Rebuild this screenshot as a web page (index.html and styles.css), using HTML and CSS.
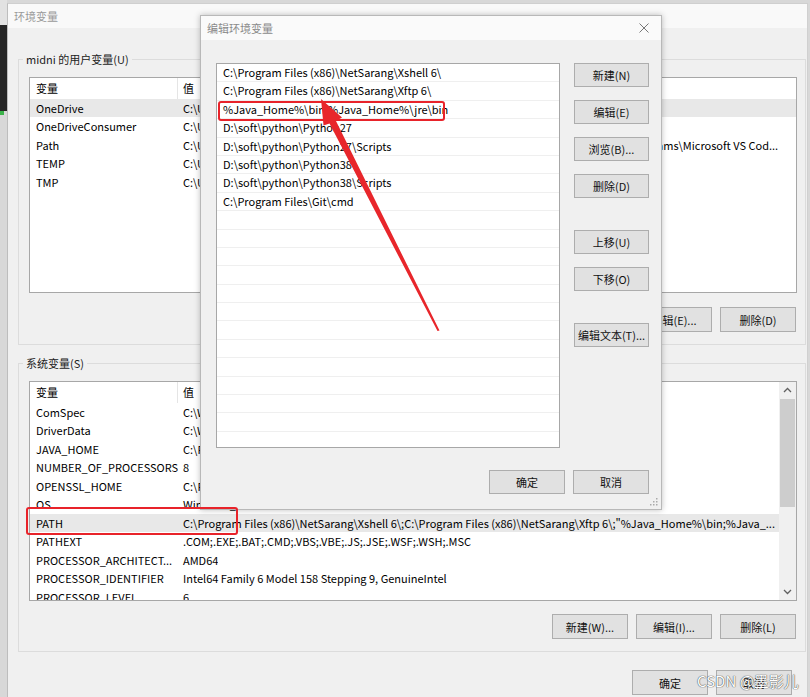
FILE: index.html
```html
<!DOCTYPE html>
<html lang="zh-CN">
<head>
	<meta charset="UTF-8">
	<title>环境变量</title>
	<link rel="stylesheet" href="styles.css">
</head>
<body>
	<div class="screen">
		<div class="side">
			<div class="side-top"></div>
			<div class="side-dark"></div>
			<div class="side-green"></div>
		</div>
		<div class="win">
			<div class="win-title">环境变量</div>
			<div class="win-body">
				<div class="group group-user">
					<div class="group-title">midni 的用户变量(U)</div>
					<div class="list list-user">
						<div class="list-body">
							<div class="row head"><span class="name">变量</span><span class="val">值</span></div>
							<div class="row sel"><span class="name">OneDrive</span><span class="val">C:\Users\midni\OneDrive</span></div>
							<div class="row"><span class="name">OneDriveConsumer</span><span class="val">C:\Users\midni\OneDrive</span></div>
							<div class="row"><span class="name">Path</span><span class="val"><span class="val-hid">C:\Users\midni\AppData\Local\Microsoft\WindowsApps;C:\Users\midni\AppData\Local\Progr</span>ams\Microsoft VS Cod...</span></div>
							<div class="row"><span class="name">TEMP</span><span class="val">C:\Users\midni\AppData\Local\Temp</span></div>
							<div class="row"><span class="name">TMP</span><span class="val">C:\Users\midni\AppData\Local\Temp</span></div>
						</div>
					</div>
					<div class="btn-row">
						<button class="btn">新建(N)...</button>
						<button class="btn">编辑(E)...</button>
						<button class="btn">删除(D)</button>
					</div>
				</div>

				<div class="group group-sys">
					<div class="group-title">系统变量(S)</div>
					<div class="list list-sys">
						<div class="list-body">
							<div class="row head"><span class="name">变量</span><span class="val">值</span></div>
							<div class="row"><span class="name">ComSpec</span><span class="val">C:\WINDOWS\system32\cmd.exe</span></div>
							<div class="row"><span class="name">DriverData</span><span class="val">C:\Windows\System32\Drivers\DriverData</span></div>
							<div class="row"><span class="name">JAVA_HOME</span><span class="val">C:\Program Files\Java\jdk1.8.0_241</span></div>
							<div class="row"><span class="name">NUMBER_OF_PROCESSORS</span><span class="val">8</span></div>
							<div class="row"><span class="name">OPENSSL_HOME</span><span class="val">C:\Program Files\OpenSSL-Win64\bin</span></div>
							<div class="row"><span class="name">OS</span><span class="val">Windows_NT</span></div>
							<div class="row sel"><span class="name">PATH</span><span class="val">C:\Program Files (x86)\NetSarang\Xshell 6\;C:\Program Files (x86)\NetSarang\Xftp 6\;"%Java_Home%\bin;%Java_...</span></div>
							<div class="row"><span class="name">PATHEXT</span><span class="val">.COM;.EXE;.BAT;.CMD;.VBS;.VBE;.JS;.JSE;.WSF;.WSH;.MSC</span></div>
							<div class="row"><span class="name">PROCESSOR_ARCHITECT...</span><span class="val">AMD64</span></div>
							<div class="row"><span class="name">PROCESSOR_IDENTIFIER</span><span class="val">Intel64 Family 6 Model 158 Stepping 9, GenuineIntel</span></div>
							<div class="row"><span class="name">PROCESSOR_LEVEL</span><span class="val">6</span></div>
						</div>
						<div class="vscroll">
							<svg class="sc-arrow" width="17" height="17" viewBox="0 0 17 17"><path d="M5 10 L8.5 6.5 L12 10" fill="none" stroke="#606060" stroke-width="1.3"/></svg>
							<div class="sc-track"><div class="sc-thumb"></div></div>
							<svg class="sc-arrow" width="17" height="17" viewBox="0 0 17 17"><path d="M5 7 L8.5 10.5 L12 7" fill="none" stroke="#606060" stroke-width="1.3"/></svg>
						</div>
					</div>
					<div class="btn-row">
						<button class="btn">新建(W)...</button>
						<button class="btn">编辑(I)...</button>
						<button class="btn">删除(L)</button>
					</div>
				</div>

				<div class="foot">
					<button class="btn">确定</button>
					<button class="btn">取消</button>
				</div>
			</div>
		</div>

		<!-- 编辑环境变量 弹窗 -->
		<div class="dlg">
			<div class="dlg-title">
				<span>编辑环境变量</span>
				<svg width="10" height="10" viewBox="0 0 10 10"><path d="M0.5 0.5 L9.5 9.5 M9.5 0.5 L0.5 9.5" stroke="#777" stroke-width="1"/></svg>
			</div>
			<div class="dlg-body">
				<div class="dlg-main">
					<div class="plist">
						<div class="prow">C:\Program Files (x86)\NetSarang\Xshell 6\</div>
						<div class="prow">C:\Program Files (x86)\NetSarang\Xftp 6\</div>
						<div class="prow">%Java_Home%\bin;%Java_Home%\jre\bin</div>
						<div class="prow">D:\soft\python\Python27</div>
						<div class="prow">D:\soft\python\Python27\Scripts</div>
						<div class="prow">D:\soft\python\Python38</div>
						<div class="prow">D:\soft\python\Python38\Scripts</div>
						<div class="prow">C:\Program Files\Git\cmd</div>
						<div class="prow"></div><div class="prow"></div><div class="prow"></div>
						<div class="prow"></div><div class="prow"></div><div class="prow"></div>
						<div class="prow"></div><div class="prow"></div><div class="prow"></div>
						<div class="prow"></div><div class="prow"></div><div class="prow"></div>
						<div class="prow"></div>
					</div>
					<div class="dlg-btns">
						<button class="btn">新建(N)</button>
						<button class="btn">编辑(E)</button>
						<button class="btn">浏览(B)...</button>
						<button class="btn">删除(D)</button>
						<button class="btn gap">上移(U)</button>
						<button class="btn">下移(O)</button>
						<button class="btn gap">编辑文本(T)...</button>
					</div>
				</div>
				<div class="dlg-foot">
					<button class="btn">确定</button>
					<button class="btn">取消</button>
				</div>
			</div>
			<svg class="grip" width="8" height="8" viewBox="0 0 8 8">
				<rect x="6" y="0" width="1.5" height="1.5" fill="#aaa"/>
				<rect x="3" y="3" width="1.5" height="1.5" fill="#aaa"/>
				<rect x="6" y="3" width="1.5" height="1.5" fill="#aaa"/>
				<rect x="0" y="6" width="1.5" height="1.5" fill="#aaa"/>
				<rect x="3" y="6" width="1.5" height="1.5" fill="#aaa"/>
				<rect x="6" y="6" width="1.5" height="1.5" fill="#aaa"/>
			</svg>
		</div>

		<!-- 红色标注 -->
		<svg class="marks" width="810" height="697" viewBox="0 0 810 697">
			<rect x="219" y="102" width="225" height="18" rx="2" fill="none" stroke="#e8232a" stroke-width="2"/>
			<rect x="27" y="508" width="210" height="26" rx="2" fill="none" stroke="#e8232a" stroke-width="2"/>
			<polygon points="439.5,330.5 336,121 342,117.5 321,99 323.5,125.5 329.5,123.5 437.5,331" fill="#e8262b"/>
		</svg>

		<div class="mark-text">CSDN @墨影儿</div>
	</div>
</body>
</html>
```

FILE: styles.css
```css
*{
	margin: 0;
	padding: 0;
	box-sizing: border-box;
}
body{
	font-family: "Noto Sans CJK SC", "Microsoft YaHei", sans-serif;
	font-size: 11px;
	color: #000;
}
.screen{
	width: 810px;
	height: 697px;
	overflow: hidden;
	position: relative;
	display: flex;
	background: #d8d8d8;
}
.side{
	width: 7px;
	flex: none;
	display: flex;
	flex-direction: column;
}
.side-top{
	height: 25px;
	background: #e2e2e2;
}
.side-dark{
	height: 86px;
	background: #262626;
}
.side-green{
	height: 4px;
	width: 4px;
	background: #3bb34a;
}
.win{
	width: 801px;
	flex: none;
	margin-top: 3px;
	background: #f0f0f0;
	border-left: 1px solid #bdbdbd;
	border-right: 1px solid #d0d0d0;
	border-top: 1px solid #cfcfcf;
}
.win-title{
	height: 24px;
	line-height: 24px;
	padding-left: 6px;
	color: #9a9a9a;
	background: #f9f9f9;
}
.win-body{
	padding: 31px 0 0 10px;
}
.group{
	width: 788px;
	border: 1px solid #dcdcdc;
	padding: 0 8px 12px 10px;
}
.group-sys{
	margin-top: 18px;
}
.group-title{
	width: fit-content;
	height: 18px;
	line-height: 18px;
	margin: -10px 0 0 -6px;
	padding: 0 3px;
	background: #f0f0f0;
	color: #222;
}
.list{
	width: 768px;
	margin-top: 9px;
	border: 1px solid #a7a7a7;
	background: #fff;
	display: flex;
	overflow: hidden;
}
.list-user{
	height: 216px;
}
.list-sys{
	height: 220px;
}
.list-body{
	flex: 1;
	min-width: 0;
	overflow: hidden;
}
.row{
	display: flex;
	height: 18.5px;
	line-height: 18.5px;
	white-space: nowrap;
}
.row.head{
	height: 20.5px;
	line-height: 20.5px;
}
.row.sel{
	background: #e8e8e8;
}
.name{
	width: 148px;
	flex: none;
	padding-left: 6px;
	overflow: hidden;
}
.head .name{
	border-right: 1px solid #e5e5e5;
}
.val{
	padding-left: 5px;
	overflow: hidden;
	text-overflow: ellipsis;
}
.val-hid{
	display: inline-block;
	width: 474px;
	overflow: hidden;
	vertical-align: top;
}
.vscroll{
	width: 17px;
	flex: none;
	background: #f0f0f0;
	display: flex;
	flex-direction: column;
}
.sc-track{
	flex: 1;
	padding: 0 1px;
}
.sc-thumb{
	height: 108px;
	background: #cdcdcd;
}
.btn-row{
	width: 768px;
	margin-top: 14px;
	padding-right: 1px;
	display: flex;
	justify-content: flex-end;
	gap: 8px;
}
.group-sys .btn-row{
	margin-top: 13px;
}
.btn{
	width: 76px;
	height: 25px;
	font: inherit;
	color: #111;
	background: #e1e1e1;
	border: 1px solid #adadad;
	white-space: nowrap;
}
.foot{
	display: flex;
	justify-content: flex-end;
	gap: 8px;
	margin-top: 18px;
	padding-right: 15px;
}

/* dialog */
.dlg{
	position: absolute;
	left: 200px;
	top: 15px;
	width: 462px;
	height: 495px;
	background: #f0f0f0;
	border: 1px solid #b8b8b8;
	box-shadow: 0 0 6px rgba(0,0,0,0.25);
	z-index: 10;
}
.dlg-title{
	height: 24px;
	line-height: 26px;
	padding: 0 12px 0 6px;
	color: #8a8a8a;
	background: #fafafa;
	display: flex;
	justify-content: space-between;
	align-items: center;
}
.dlg-body{
	padding: 23px 12px 0 15px;
}
.dlg-main{
	display: flex;
	gap: 14px;
}
.plist{
	width: 344px;
	height: 385px;
	border: 1px solid #a7a7a7;
	background: #fff;
	overflow: hidden;
}
.prow{
	height: 18.4px;
	line-height: 17.4px;
	padding-left: 6px;
	border-bottom: 1px solid #efefef;
	white-space: nowrap;
}
.dlg-btns{
	width: 75px;
	display: flex;
	flex-direction: column;
	gap: 13px;
}
.dlg-btns .btn{
	width: 75px;
	height: 24px;
}
.dlg-btns .btn.gap{
	margin-top: 19px;
}
.dlg-foot{
	display: flex;
	justify-content: flex-end;
	gap: 8px;
	margin-top: 22px;
}
.dlg-foot .btn{
	height: 24px;
}
.grip{
	position: absolute;
	right: 3px;
	bottom: 3px;
}

/* 标注 */
.marks{
	position: absolute;
	left: 0;
	top: 0;
	z-index: 20;
}
.mark-text{
	position: absolute;
	left: 697px;
	top: 670px;
	font-size: 15px;
	color: #fff;
	text-shadow: 0 0 1px #444, 0 0 1px #444;
	z-index: 30;
	white-space: nowrap;
}
```
